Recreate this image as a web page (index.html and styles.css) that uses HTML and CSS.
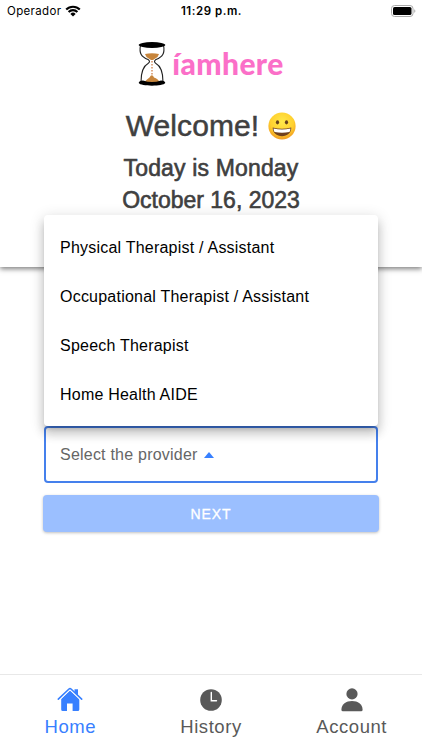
FILE: index.html
```html
<!DOCTYPE html>
<html lang="en">

<head>
    <meta charset="UTF-8" />
    <meta name="viewport" content="width=device-width, initial-scale=1" />
    <title>iamhere</title>
    <link rel="stylesheet" href="styles.css">
</head>

<body>
    <header class="header">
        <div class="status-bar">
            <div class="carrier">
                <span>Operador</span>
                <svg class="wifi" viewBox="0 0 16 12">
                    <path d="M1.2 4.5a9.6 9.6 0 0 1 13.6 0M3.6 7a6.2 6.2 0 0 1 8.8 0" fill="none" stroke="#000" stroke-width="2.1" />
                    <path d="M8 11.5 5.4 8.9a3.7 3.7 0 0 1 5.2 0z" />
                </svg>
            </div>
            <div class="clock">11:29 p.m.</div>
            <svg class="battery" viewBox="0 0 25 12">
                <rect x=".5" y=".5" width="21.5" height="11" rx="3" fill="#fff" stroke="#aaa" />
                <rect x="2" y="2" width="18.5" height="8" rx="1.6" />
                <path d="M23.4 4.2v3.6c1.2-.5 1.2-3.1 0-3.6z" fill="#999" />
            </svg>
        </div>

        <div class="logo">
            <svg class="hourglass" viewBox="0 0 28 46">
                <path d="M2.500 4C1 12 3 16 10 18.500q3 2 0 4C3.500 26 3 34 3 41M25.500 4C27 12 25 16 18 18.500q-3 2 0 4C24.500 26 25 34 25 41" fill="none" stroke="#222" stroke-width="1.100" />
                <path d="M7 13q7-1.500 14 0l-1.500 3-4.500 3h-2l-4.500-3z" fill="#c7853c" />
                <path d="M14 20v14" stroke="#e0ab88" stroke-width="2" stroke-dasharray="1.500 1.500" />
                <path d="M6.500 41q2.500-3 5-4.500Q14 32 16 36.500q4 1 5.500 4.500z" fill="#c7853c" />
                <ellipse cx="14" cy="4" rx="13.300" ry="2.900" />
                <path d="M.7 42Q1 39.500 5 39.500q9 3 18 0 4 0 4.300 2.500c-2 3.500-24.600 3.500-26.600 0z" />
            </svg>
            <span class="logo-text">íamhere</span>
        </div>

        <h1 class="welcome">
            <span>Welcome!</span>
            <svg class="emoji" viewBox="0 0 28 28">
                <defs>
                    <radialGradient id="face" cx=".5" cy=".35" r=".65">
                        <stop offset="0" stop-color="#ffe94a" />
                        <stop offset=".65" stop-color="#ffd02f" />
                        <stop offset="1" stop-color="#f09a20" />
                    </radialGradient>
                </defs>
                <circle cx="14" cy="14" r="13.600" fill="url(#face)" />
                <ellipse cx="9.500" cy="10.300" rx="1.600" ry="2.100" fill="#66401a" />
                <ellipse cx="18.500" cy="10.300" rx="1.600" ry="2.100" fill="#66401a" />
                <path d="M4.700 15.500q9.300 2.500 18.600 0c.3 5-4 8.700-9.300 8.700s-9.600-3.700-9.300-8.700z" fill="#70401c" />
                <path d="M5.500 16.400q8.500 2.100 17 0-.2 2.600-1.200 3.500-7.300 1.600-14.600 0-1-.9-1.200-3.500z" fill="#fff" />
            </svg>
        </h1>
        <p class="date today">Today is Monday</p>
        <p class="date">October 16, 2023</p>
    </header>

    <main class="content">
        <div class="select">
            <span class="placeholder">Select the provider</span>
            <span class="arrow-up"></span>
            <ul class="menu">
                <li>Physical Therapist / Assistant</li>
                <li>Occupational Therapist / Assistant</li>
                <li>Speech Therapist</li>
                <li>Home Health AIDE</li>
            </ul>
        </div>
        <button class="next">NEXT</button>
    </main>

    <nav class="tabs">
        <a class="tab active">
            <svg viewBox="0 0 26 26">
                <path d="M13 3.500 4.200 11.800V22.500q0 1.500 1.500 1.500H10v-7.500h5.600V24h5.200q1.500 0 1.500-1.500V11.800z" />
                <path d="M1.200 12.500 12 2.100q1-.9 2 0l10.800 10.400" fill="none" stroke="#fff" stroke-width="3.400" />
                <path d="M17.500 2.200H21V9l-3.500-3.500z" />
                <path d="M1.300 12.200 12 2q1-.9 2 0l10.700 10.200" fill="none" stroke="#3880ff" stroke-width="1.600" stroke-linecap="round" />
            </svg>
            <span>Home</span>
        </a>
        <a class="tab">
            <svg viewBox="0 0 26 26">
                <circle cx="13" cy="13" r="10.800" />
                <path d="M13.300 5.500v8.300h5.200" fill="none" stroke="#fff" stroke-width="1.400" stroke-linecap="round" />
            </svg>
            <span>History</span>
        </a>
        <a class="tab">
            <svg viewBox="0 0 26 26">
                <circle cx="13" cy="6.900" r="5.600" />
                <path d="M2.400 22.800c0-5.500 4.800-8.700 10.600-8.700s10.600 3.200 10.600 8.700q0 1.500-1.500 1.500H3.900q-1.500 0-1.500-1.500z" />
            </svg>
            <span>Account</span>
        </a>
    </nav>
</body>

</html>
```

FILE: styles.css
```css
* {
    box-sizing: border-box;
}

body {
    display: flex;
    flex-direction: column;
    height: 750px;
    margin: 0;
    overflow: hidden;
    background: #fff;
    font-family: "Liberation Sans", Arial, sans-serif;
}

.header {
    height: 267px;
    background: #fff;
    color: #404040;
    box-shadow: 0 2px 5px rgba(0, 0, 0, 0.5);
}

.status-bar {
    display: grid;
    grid-template-columns: 1fr auto 1fr;
    align-items: center;
    height: 22px;
    padding: 0 6px 0 7px;
    color: #000;
    font-family: Inter, sans-serif;
    font-size: 11.5px;
}

.carrier {
    display: flex;
    align-items: center;
    gap: 4px;
    letter-spacing: 0.35px;
}

.wifi {
    width: 16px;
    height: 12px;
}

.clock {
    font-weight: 600;
    letter-spacing: 0.55px;
}

.battery {
    justify-self: end;
    width: 25px;
    height: 12px;
}

.logo {
    display: flex;
    justify-content: center;
    height: 46px;
    margin-top: 19px;
    gap: 6px;
}

.hourglass {
    width: 28px;
    height: 46px;
}

.logo-text {
    color: #fb6fc8;
    font-family: Lato, sans-serif;
    font-size: 30px;
    font-weight: 900;
    letter-spacing: 0.4px;
    line-height: 44px;
}

.welcome {
    display: flex;
    align-items: center;
    justify-content: center;
    gap: 9px;
    height: 40px;
    margin: 19px 0 0;
    font-size: 30px;
    font-weight: normal;
    letter-spacing: 0.1px;
    -webkit-text-stroke: 0.5px #404040;
}

.emoji {
    width: 28px;
    height: 28px;
}

.date {
    margin: 0;
    font-size: 23px;
    line-height: 32px;
    text-align: center;
    -webkit-text-stroke: 0.6px #404040;
}

.today {
    margin-top: 6px;
    letter-spacing: 0.15px;
}

.content {
    display: flex;
    flex: 1;
    flex-direction: column;
    gap: 12px;
    padding: 159px 43px 0;
}

.select {
    position: relative;
    display: flex;
    align-items: center;
    gap: 6px;
    height: 57px;
    margin: 0 1px;
    padding: 0 14px;
    border: 2px solid #4580ec;
    border-radius: 4px;
    color: #666;
    font-size: 16px;
    letter-spacing: 0.22px;
}

.arrow-up {
    border: 5px solid transparent;
    border-top: 0;
    border-bottom: 6px solid #3880ff;
}

.menu {
    position: absolute;
    right: -2px;
    bottom: 55px;
    left: -2px;
    margin: 0;
    padding: 8px 0 7px;
    border-radius: 4px;
    background: #fff;
    box-shadow: 0 5px 5px -3px rgba(0, 0, 0, 0.2), 0 8px 10px 1px rgba(0, 0, 0, 0.14), 0 3px 14px 2px rgba(0, 0, 0, 0.12);
    color: #000;
    list-style: none;
}

.menu li {
    padding-left: 16px;
    line-height: 49px;
}

.next {
    height: 37px;
    border: 0;
    border-radius: 4px;
    background: #9bbfff;
    box-shadow: 0 1px 3px rgba(0, 0, 0, 0.25);
    color: #fff;
    font-family: "Liberation Sans", Arial, sans-serif;
    font-size: 14px;
    letter-spacing: 0.9px;
    -webkit-text-stroke: 0.3px #fff;
}

.tabs {
    display: grid;
    grid-template-columns: repeat(3, 1fr);
    height: 76px;
    border-top: 1px solid #e8e8e8;
    background: #fff;
}

.tab {
    display: flex;
    flex-direction: column;
    align-items: center;
    padding-top: 12px;
    color: #595959;
    fill: #595959;
    font-size: 18.5px;
    letter-spacing: 0.55px;
    line-height: 28px;
}

.tab svg {
    width: 26px;
    height: 26px;
}

.active {
    color: #3880ff;
    fill: #3880ff;
}
```
